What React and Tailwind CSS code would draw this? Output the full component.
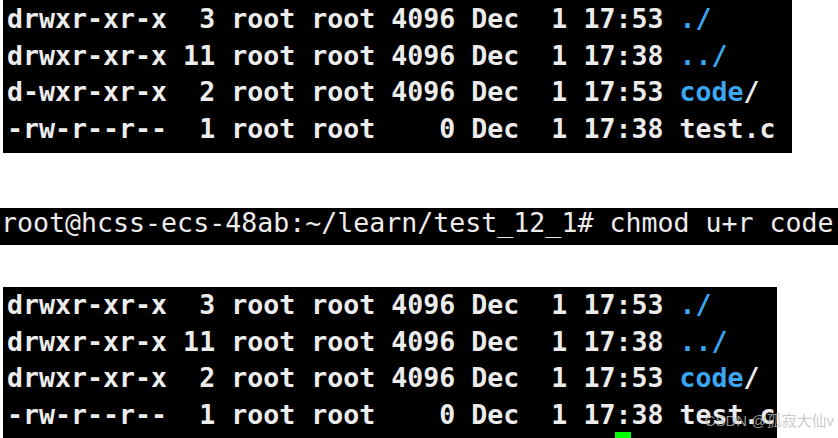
import React from "react";

const before = [
  { perm: "drwxr-xr-x", links: " 3", size: "4096", time: "17:53", name: "./", dir: true },
  { perm: "drwxr-xr-x", links: "11", size: "4096", time: "17:38", name: "../", dir: true },
  { perm: "d-wxr-xr-x", links: " 2", size: "4096", time: "17:53", name: "code", dir: true, slash: true },
  { perm: "-rw-r--r--", links: " 1", size: "   0", time: "17:38", name: "test.c" },
];

const after = [
  { perm: "drwxr-xr-x", links: " 3", size: "4096", time: "17:53", name: "./", dir: true },
  { perm: "drwxr-xr-x", links: "11", size: "4096", time: "17:38", name: "../", dir: true },
  { perm: "drwxr-xr-x", links: " 2", size: "4096", time: "17:53", name: "code", dir: true, slash: true },
  { perm: "-rw-r--r--", links: " 1", size: "   0", time: "17:38", name: "test.c" },
];

const mono = { fontFamily: '"DejaVu Sans Mono", "Liberation Mono", monospace' };

const Listing = ({ rows }) => (
  <div className="flex flex-col">
    {rows.map((r, i) => (
      <div key={i} className="whitespace-pre h-[36.7px] leading-[36.7px]">
        {`${r.perm} ${r.links} root root ${r.size} Dec  1 ${r.time} `}
        {r.slash ? (
          <>
            <span className="text-[#3ba6f2]">{r.name}</span>/
          </>
        ) : (
          <span className={r.dir ? "text-[#3ba6f2]" : ""}>{r.name}</span>
        )}
      </div>
    ))}
  </div>
);

export default function App() {
  return (
    <div className="relative w-[838px] h-[438px] overflow-hidden bg-white flex flex-col" style={mono}>
      {/* ls before */}
      <div className="ml-[3px] w-[789px] h-[153px] bg-black pl-[4px] pt-[1px] text-[26.6px] font-bold text-[#ececec]">
        <Listing rows={before} />
      </div>

      {/* command */}
      <div className="mt-[55px] w-[838px] h-[37px] bg-black pl-[1px] text-[26.6px] leading-[30px] text-[#ececec] whitespace-pre">
        root@hcss-ecs-48ab:~/learn/test_12_1# chmod u+r code
      </div>

      {/* ls after */}
      <div className="relative mt-[42px] ml-[3px] w-[774px] flex-1 bg-black pl-[4px] text-[26.6px] font-bold text-[#ececec]">
        <Listing rows={after} />
        <div className="absolute left-[612px] bottom-0 w-[16px] h-[6px] bg-[#00ff00]" />
      </div>

      {/* watermark */}
      <div
        className="absolute right-[4px] bottom-[6px] text-[15px] text-[#bdbdbd]/80"
        style={{ fontFamily: '"Liberation Sans", "Noto Sans CJK SC", sans-serif' }}
      >
        CSDN @孤寂大仙v
      </div>
    </div>
  );
}
